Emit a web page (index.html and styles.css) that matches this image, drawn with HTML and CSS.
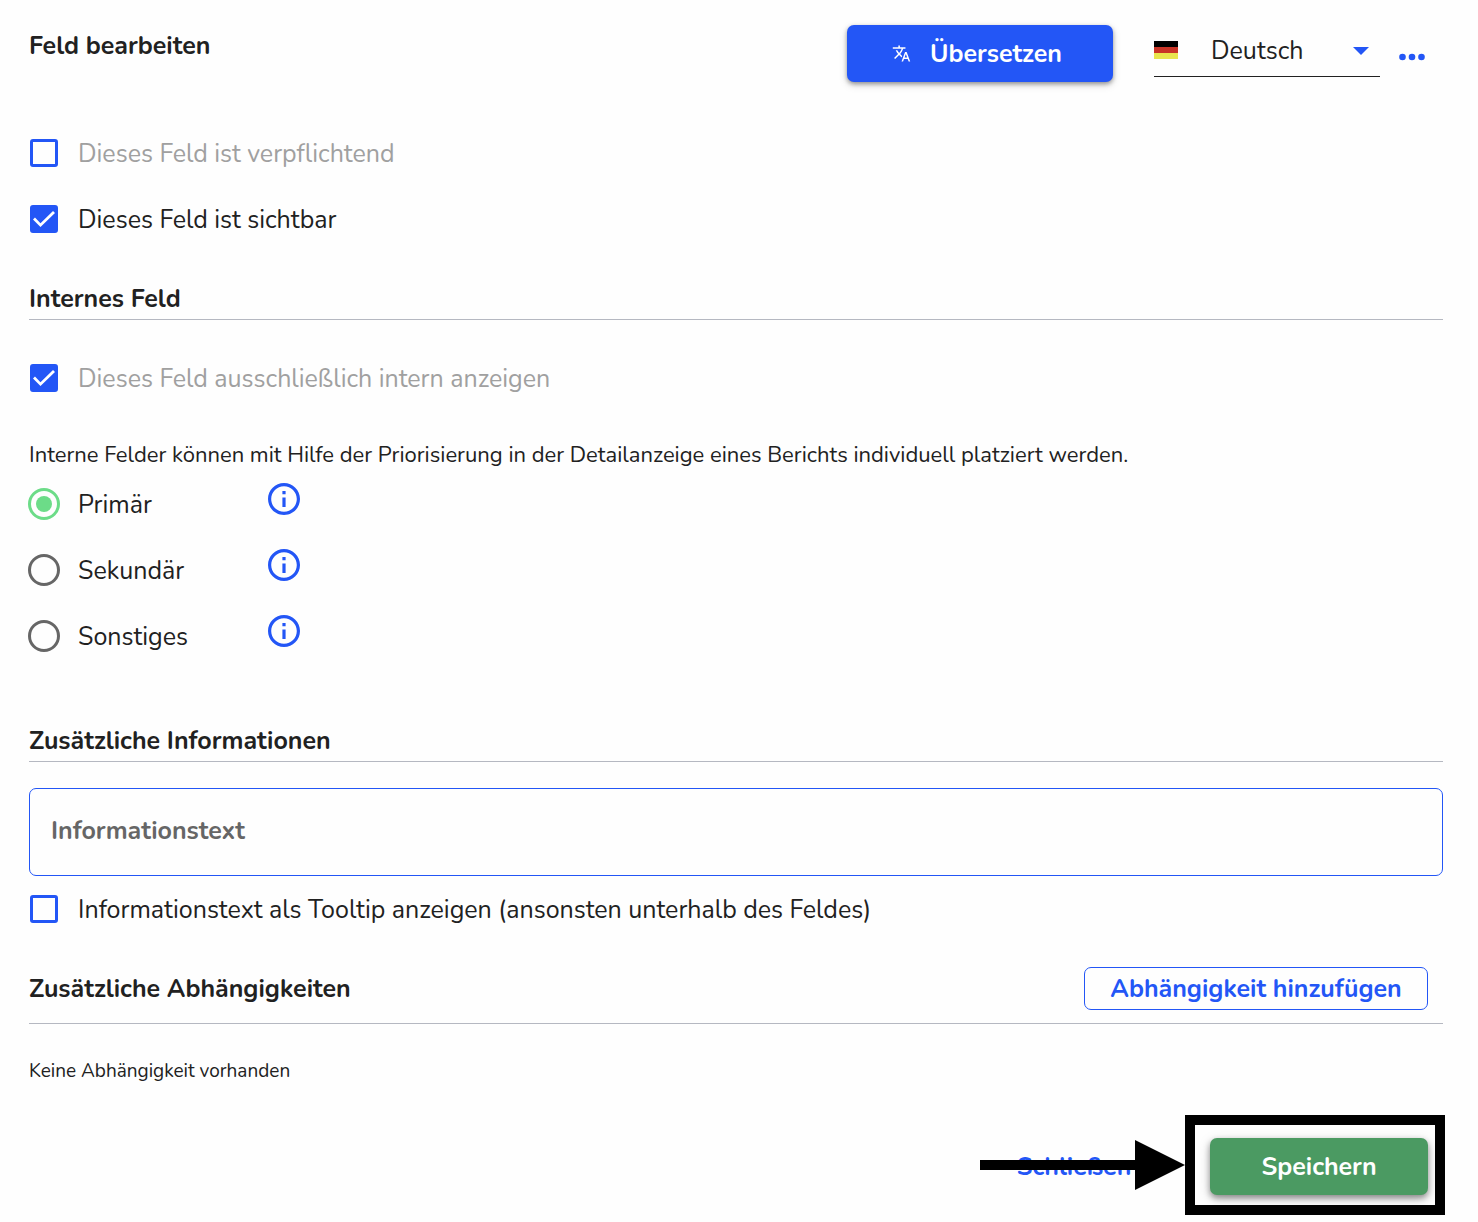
FILE: index.html
```html
<!DOCTYPE html>
<html lang="de">
<head>
<meta charset="utf-8">
<meta name="viewport" content="width=device-width, initial-scale=1">
<title>Feld bearbeiten</title>
<link rel="stylesheet" href="styles.css">
</head>
<body>
<svg class="symbols" aria-hidden="true">
  <symbol id="info" viewBox="2 2 20 20">
    <path d="M11 7h2v2h-2zm0 4h2v6h-2zm1-9C6.480 2 2 6.480 2 12s4.480 10 10 10 10-4.480 10-10S17.520 2 12 2zm0 18c-4.410 0-8-3.590-8-8s3.590-8 8-8 8 3.590 8 8-3.590 8-8 8z" fill="currentColor"/>
  </symbol>
</svg>
<form class="editor">
  <header class="top">
    <h1 class="title">Feld bearbeiten</h1>
    <button type="button" class="btn btn-primary">
      <svg class="translate" viewBox="0 0 24 24" aria-hidden="true"><path fill="currentColor" d="M12.870 15.070l-2.540-2.510.03-.03c1.740-1.940 2.980-4.170 3.710-6.530H17V4h-7V2H8v2H1v1.990h11.170C11.500 7.920 10.440 9.750 9 11.350 8.070 10.320 7.300 9.190 6.690 8h-2c.73 1.630 1.730 3.170 2.980 4.560l-5.090 5.020L4 19l5-5 3.110 3.110.76-2.040zM18.500 10h-2L12 22h2l1.120-3h4.750L21 22h2l-4.500-12zm-2.620 7l1.620-4.330L19.120 17h-3.240z"/></svg>
      Übersetzen
    </button>
    <div class="language">
      <svg class="flag" viewBox="0 0 24 18" aria-hidden="true"><path d="M0 0h24v6H0z"/><path fill="#c93326" d="M0 6h24v6H0z"/><path fill="#e9e54d" d="M0 12h24v6H0z"/></svg>
      <select class="language-select" aria-label="Sprache"><option>Deutsch</option></select>
      <svg class="caret" viewBox="0 0 16 8" aria-hidden="true"><path fill="currentColor" d="M0 0h16L8 8z"/></svg>
    </div>
    <button type="button" class="more" aria-label="Mehr">
      <svg viewBox="0 0 26 8" aria-hidden="true"><g fill="currentColor"><circle cx="3.500" cy="4" r="3.300"/><circle cx="13" cy="4" r="3.300"/><circle cx="22.500" cy="4" r="3.300"/></g></svg>
    </button>
  </header>

  <div class="basics">
    <div class="option"><input class="check" type="checkbox" id="required" disabled><label for="required">Dieses Feld ist verpflichtend</label></div>
    <div class="option"><input class="check" type="checkbox" id="visible" checked><label for="visible">Dieses Feld ist sichtbar</label></div>
  </div>

  <section class="internal">
    <h2 class="heading">Internes Feld</h2>
    <div class="option"><input class="check" type="checkbox" id="internal" checked disabled><label for="internal">Dieses Feld ausschließlich intern anzeigen</label></div>
    <p class="hint">Interne Felder können mit Hilfe der Priorisierung in der Detailanzeige eines Berichts individuell platziert werden.</p>
    <div class="option"><input class="radio" type="radio" name="priority" id="primary" checked><label class="priority" for="primary">Primär</label><svg class="info" aria-hidden="true"><use href="#info"/></svg></div>
    <div class="option"><input class="radio" type="radio" name="priority" id="secondary"><label class="priority" for="secondary">Sekundär</label><svg class="info" aria-hidden="true"><use href="#info"/></svg></div>
    <div class="option"><input class="radio" type="radio" name="priority" id="other"><label class="priority" for="other">Sonstiges</label><svg class="info" aria-hidden="true"><use href="#info"/></svg></div>
  </section>

  <section class="extra">
    <h2 class="heading">Zusätzliche Informationen</h2>
    <input class="info-text" type="text" placeholder="Informationstext" aria-label="Informationstext">
    <div class="option"><input class="check" type="checkbox" id="tooltip"><label for="tooltip">Informationstext als Tooltip anzeigen (ansonsten unterhalb des Feldes)</label></div>
  </section>

  <section class="dependencies">
    <div class="dependencies-head">
      <h2 class="title">Zusätzliche Abhängigkeiten</h2>
      <button type="button" class="btn btn-outline">Abhängigkeit hinzufügen</button>
    </div>
    <p class="empty">Keine Abhängigkeit vorhanden</p>
  </section>

  <footer class="actions">
    <button type="button" class="btn btn-text">Schließen</button>
    <div class="save">
      <button type="submit" class="btn btn-save">Speichern</button>
      <span class="marker"></span>
      <svg class="arrow" viewBox="0 0 205 50" aria-hidden="true"><path d="M0 20h155V0l50 25-50 25V30H0z"/></svg>
    </div>
  </footer>
</form>
</body>
</html>
```
FILE: styles.css
```css
:root {
  --blue: #2356f6;
  --ink: #212121;
  --line: #b5b8c1;
}

* { box-sizing: border-box; }

body {
  margin: 0;
  background: #fefefe;
  color: var(--ink);
  font: 25px/32px Nunito, Lato, sans-serif;
}

h1, h2, p { margin: 0; }
button, input, select { margin: 0; font: inherit; }
svg { display: block; flex: none; }
.symbols { position: absolute; width: 0; height: 0; }

.editor { padding: 25px 35px 27px 29px; }

.top { display: flex; align-items: flex-start; }
.title, .heading { font-size: 25px; line-height: 32px; font-weight: 700; }
.top .title { flex: 1; padding-top: 5px; }

.btn {
  display: flex;
  align-items: center;
  justify-content: center;
  padding: 0;
  border: 0;
  border-radius: 7px;
  background: none;
  color: var(--blue);
  font-weight: 700;
  white-space: nowrap;
}
.btn-primary, .btn-save {
  height: 57px;
  color: #fff;
  box-shadow: 0 2px 4px rgba(0, 0, 0, .35), 0 3px 8px rgba(0, 0, 0, .15);
}
.btn-primary { width: 266px; gap: 19px; padding-right: 6px; background: var(--blue); }
.translate { width: 19px; height: 19px; }

.language {
  position: relative;
  width: 226px;
  height: 52px;
  margin-left: 41px;
  border-bottom: 1px solid var(--ink);
}
.language-select {
  width: 100%;
  height: 51px;
  padding: 0 40px 0 57px;
  border: 0;
  appearance: none;
  background: none;
  color: inherit;
}
.flag, .caret { position: absolute; pointer-events: none; }
.flag { top: 16px; left: 0; width: 24px; height: 18px; }
.caret { top: 22px; right: 11px; width: 16px; height: 8px; color: var(--blue); }

.more {
  width: 26px;
  height: 57px;
  margin: 0 18px 0 19px;
  padding: 7px 0 0;
  border: 0;
  background: none;
  color: var(--blue);
}

.basics { margin-top: 38px; }
.option { display: flex; align-items: center; height: 66px; margin-left: -1px; }
.option label { margin-left: 18px; padding-top: 2px; }
.option input:disabled + label { color: #a0a0a0; }

.check, .radio {
  flex: none;
  display: grid;
  place-content: center;
  appearance: none;
}
.check {
  width: 28px;
  height: 28px;
  margin: 0 2px;
  border: 3px solid var(--blue);
  border-radius: 3px;
}
.check:checked { background: var(--blue); }
.check:checked::before {
  content: "";
  width: 22px;
  height: 16px;
  background: #fff;
  clip-path: polygon(0 53%, 9% 41%, 34% 76%, 91% 0, 100% 12%, 34% 100%);
}
.radio {
  width: 32px;
  height: 32px;
  border: 3px solid #666;
  border-radius: 50%;
}
.radio:checked { border-color: #6cdc88; }
.radio:checked::before {
  content: "";
  width: 16px;
  height: 16px;
  border-radius: 50%;
  background: #6cdc88;
}

.heading { padding: 1px 0 4px; border-bottom: 1px solid var(--line); }
.internal { margin-top: 30px; }
.internal .heading { margin-bottom: 25px; }
.hint { margin-top: 28px; font-size: 22px; }
.priority { width: 190px; }
.info { width: 32px; height: 32px; margin-bottom: 10px; color: var(--blue); }

.extra { margin-top: 55px; }
.info-text {
  display: block;
  width: 100%;
  height: 88px;
  margin-top: 26px;
  padding: 0 21px 2px;
  border: 1px solid var(--blue);
  border-radius: 7px;
  background: none;
  font-weight: 700;
}
.info-text::placeholder { color: #666; opacity: 1; }

.dependencies { margin-top: 25px; }
.dependencies-head {
  display: flex;
  justify-content: space-between;
  align-items: center;
  padding: 0 15px 13px 0;
  border-bottom: 1px solid var(--line);
}
.btn-outline { width: 344px; height: 43px; border: 1px solid var(--blue); }
.empty { margin-top: 31px; font-size: 19px; }

.actions {
  display: flex;
  justify-content: flex-end;
  align-items: center;
  margin-top: 51px;
  padding-right: 15px;
}
.btn-text { width: 218px; height: 57px; margin-right: 27px; }
.save { position: relative; }
.btn-save {
  width: 218px;
  background: #4b9a62;
  box-shadow: 0 3px 6px rgba(0, 0, 0, .4), 0 4px 14px rgba(0, 0, 0, .15);
}
.marker, .arrow { position: absolute; pointer-events: none; }
.marker { inset: -23px -17px -20px -25px; border: 10px solid #000; }
.arrow { top: 2px; right: 243px; width: 205px; height: 50px; }
```
